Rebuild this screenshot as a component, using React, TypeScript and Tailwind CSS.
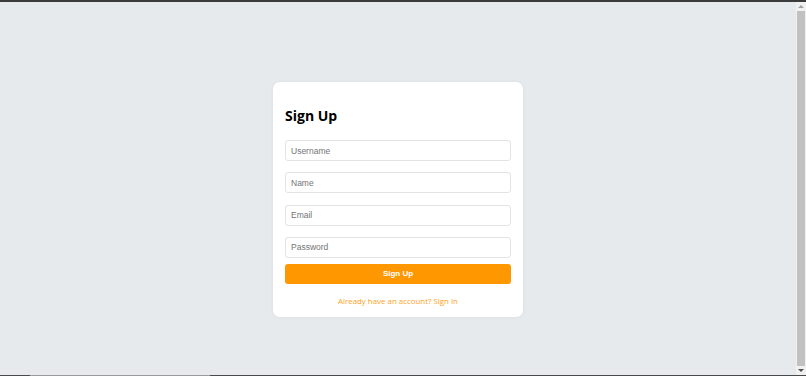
import React, { useState } from 'react';

const fields = [
  { name: 'username', placeholder: 'Username', type: 'text' },
  { name: 'name', placeholder: 'Name', type: 'text' },
  { name: 'email', placeholder: 'Email', type: 'email' },
  { name: 'password', placeholder: 'Password', type: 'password' },
];

const ScrollBar: React.FC = () => (
  <div className="w-[10px] flex flex-col items-center bg-[#f1f1f1]">
    <div className="h-[9px] flex items-center justify-center">
      <div className="w-0 h-0 border-l-[3px] border-r-[3px] border-b-[3px] border-l-transparent border-r-transparent border-b-[#a3a3a3]" />
    </div>
    <div className="flex-1 w-[8px] bg-[#c1c1c1]" />
    <div className="h-[9px] flex items-center justify-center">
      <div className="w-0 h-0 border-l-[3px] border-r-[3px] border-t-[3px] border-l-transparent border-r-transparent border-t-[#505050]" />
    </div>
  </div>
);

export default function App() {
  const [values, setValues] = useState<Record<string, string>>({});

  const handleChange = (name: string, value: string) => {
    setValues((prev) => ({ ...prev, [name]: value }));
  };

  return (
    <div className="h-[376px] w-[806px] flex flex-col overflow-hidden">
      <div className="h-[2px] bg-[#3c3c3c]" />
      <div className="flex-1 flex min-h-0">
        <main className="flex-1 bg-[#e7eaed] flex justify-center pt-[80px]">
          <div className="w-[250px] h-fit bg-white rounded-[7px] shadow-[0_0_4px_rgba(0,0,0,0.05)] px-[12px] pt-[24px] pb-[10px]">
            <h2 className="font-['Open_Sans',sans-serif] text-[14px] leading-[19px] font-bold text-black mb-[15px]">
              Sign Up
            </h2>
            <form className="flex flex-col" onSubmit={(e) => e.preventDefault()}>
              <div className="flex flex-col gap-[11.3px]">
                {fields.map((field) => (
                  <input
                    key={field.name}
                    type={field.type}
                    placeholder={field.placeholder}
                    value={values[field.name] || ''}
                    onChange={(e) => handleChange(field.name, e.target.value)}
                    className="h-[21px] w-full border border-[#e3e3e3] rounded-[3px] px-[5px] font-['Liberation_Sans',Arial,sans-serif] text-[8.5px] text-[#333] placeholder:text-[#757575] outline-none"
                  />
                ))}
              </div>
              <button
                type="submit"
                className="mt-[6px] h-[20px] w-full rounded-[3px] bg-[#ff9800] text-white font-['Liberation_Sans',Arial,sans-serif] text-[8px] font-bold"
              >
                Sign Up
              </button>
            </form>
            <p className="mt-[12px] text-center font-['Open_Sans',sans-serif] text-[7.9px] leading-[11px] text-[#ff9f1c]">
              Already have an account? Sign In
            </p>
          </div>
        </main>
        <ScrollBar />
      </div>
      <div className="h-[1px] flex">
        <div className="w-[30px] bg-[#4a4a4a]" />
        <div className="w-[180px] bg-[#9a9a9a]" />
        <div className="flex-1 bg-[#4a4a4a]" />
      </div>
    </div>
  );
}
